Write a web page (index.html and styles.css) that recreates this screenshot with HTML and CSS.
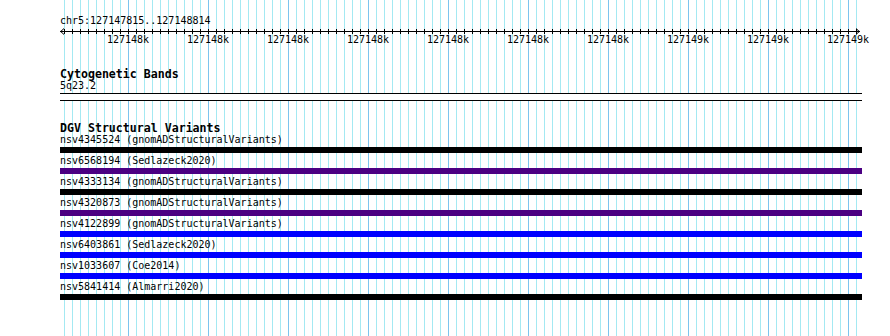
FILE: index.html
```html
<!DOCTYPE html>
<html lang="en">
<head>
    <meta charset="UTF-8">
    <title>Genome view chr5:127147815..127148814</title>
    <link rel="stylesheet" href="styles.css">
</head>
<body>
    <div class="view">
        <div class="loc">chr5:127147815..127148814</div>

        <svg class="ruler" width="802" height="8" viewBox="0 0 802 8">
            <defs>
                <pattern id="tick" x="4" y="0" width="8" height="8" patternUnits="userSpaceOnUse">
                    <rect x="0" y="2" width="1" height="5" fill="#000"></rect>
                </pattern>
            </defs>
            <rect x="4" y="0" width="793" height="8" fill="url(#tick)"></rect>
            <line x1="0" y1="4.5" x2="800" y2="4.5" stroke="#000" stroke-width="1"></line>
            <polyline points="4,1.5 0.7,4.5 4,7.5" fill="none" stroke="#000" stroke-width="1"></polyline>
            <polyline points="796,1.5 799.3,4.5 796,7.5" fill="none" stroke="#000" stroke-width="1"></polyline>
        </svg>

        <div class="ticks">
            <span>127148k</span>
            <span>127148k</span>
            <span>127148k</span>
            <span>127148k</span>
            <span>127148k</span>
            <span>127148k</span>
            <span>127148k</span>
            <span>127149k</span>
            <span>127149k</span>
            <span>127149k</span>
        </div>

        <div class="track cyto">
            <div class="track-label">Cytogenetic Bands</div>
            <div class="feat-label">5q23.2</div>
            <div class="band"></div>
        </div>

        <div class="track dgv">
            <div class="track-label">DGV Structural Variants</div>
            <div class="feature">
                <div class="feat-label">nsv4345524 (gnomADStructuralVariants)</div>
                <div class="bar black"></div>
            </div>
            <div class="feature">
                <div class="feat-label">nsv6568194 (Sedlazeck2020)</div>
                <div class="bar purple"></div>
            </div>
            <div class="feature">
                <div class="feat-label">nsv4333134 (gnomADStructuralVariants)</div>
                <div class="bar black"></div>
            </div>
            <div class="feature">
                <div class="feat-label">nsv4320873 (gnomADStructuralVariants)</div>
                <div class="bar purple"></div>
            </div>
            <div class="feature">
                <div class="feat-label">nsv4122899 (gnomADStructuralVariants)</div>
                <div class="bar blue"></div>
            </div>
            <div class="feature">
                <div class="feat-label">nsv6403861 (Sedlazeck2020)</div>
                <div class="bar blue"></div>
            </div>
            <div class="feature">
                <div class="feat-label">nsv1033607 (Coe2014)</div>
                <div class="bar blue"></div>
            </div>
            <div class="feature">
                <div class="feat-label">nsv5841414 (Almarri2020)</div>
                <div class="bar black"></div>
            </div>
        </div>
    </div>
</body>
</html>
```

FILE: styles.css
```css
body {
    margin: 0;
    background-color: #fff;
    font-family: "DejaVu Sans Mono", "Liberation Mono", monospace;
    font-size: 10px;
    color: #000;
}
.view {
    width: 802px;
    height: 336px;
    margin-left: 60px;
    padding-top: 15px;
    box-sizing: border-box;
    background-image:
        linear-gradient(to right, #7cc4ee 1px, transparent 1px),
        linear-gradient(to right, #a4e9f2 1px, transparent 1px);
    background-size: 80px 100%, 8px 100%;
    background-position: 68px 0, 4px 0;
    background-repeat: repeat-x;
}
.loc {
    line-height: 12px;
    white-space: nowrap;
}
.ruler {
    display: block;
}
.ticks {
    display: flex;
    margin-top: -1px;
    padding-left: 28px;
    line-height: 12px;
    white-space: nowrap;
}
.ticks span {
    flex: 0 0 80px;
    text-align: center;
}
.track-label {
    font-weight: bold;
    font-size: 11.6px;
    line-height: 12px;
    white-space: nowrap;
}
.feat-label {
    line-height: 12px;
    white-space: nowrap;
}
.cyto {
    margin-top: 22px;
}
.band {
    height: 8px;
    margin-top: 1px;
    box-sizing: border-box;
    border-top: 1px solid #000;
    border-bottom: 1px solid #000;
    background-color: #fff;
}
.dgv {
    margin-top: 21px;
}
.feature {
    margin-bottom: 2px;
}
.bar {
    height: 6px;
    margin-top: 1px;
}
.black {
    background-color: #000;
}
.purple {
    background-color: #4b0082;
}
.blue {
    background-color: #0000ff;
}
```
